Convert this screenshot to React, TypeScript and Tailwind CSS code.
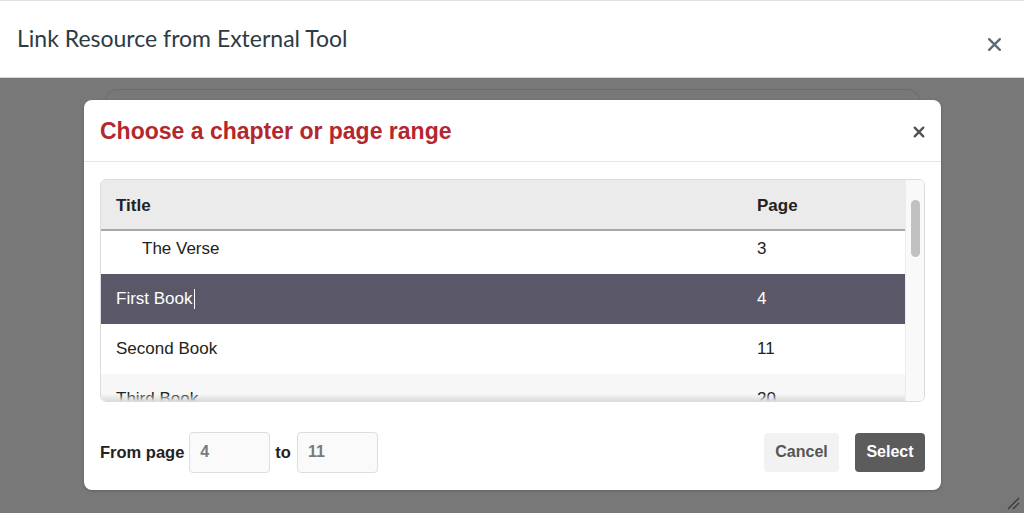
const rows = [
	{ title: 'The Verse', page: '3', indent: true },
	{ title: 'First Book', page: '4', selected: true },
	{ title: 'Second Book', page: '11' },
	{ title: 'Third Book', page: '20', shaded: true },
	{ title: 'Fourth Book', page: '27' },
];

function CloseIcon({ className, stroke }: { className: string; stroke: number }) {
	return (
		<svg viewBox="0 0 14 14" className={className} fill="none" stroke="currentColor" strokeWidth={stroke} strokeLinecap="round">
			<path d="M2 2 L12 12 M12 2 L2 12" />
		</svg>
	);
}

export default function App() {
	return (
		<div className="w-[1024px] h-[513px] flex flex-col bg-[#787878] overflow-hidden font-['Liberation_Sans',Arial,sans-serif]">
			<div className="h-[78px] shrink-0 bg-white border-t border-[#e2e2e2] border-b border-b-[#d8d8d8] flex items-center justify-between pl-[17px] pr-[22px]">
				<h1 className="font-['Lato',sans-serif] text-[23px] text-[#2d3b45] -mt-[2px]">Link Resource from External Tool</h1>
				<CloseIcon className="w-[15px] h-[15px] text-[#5f6b73] mt-[10px]" stroke={2.2} />
			</div>

			<div className="relative flex-1">
				<div className="absolute left-[105px] top-[11px] w-[815px] h-[395px] rounded-[12px] border border-[#6c6c6c]" />

				<div className="absolute left-[84px] top-[22px] w-[857px] h-[390px] bg-white rounded-[8px] flex flex-col shadow-[0_1px_3px_rgba(0,0,0,0.2)]">
					<div className="h-[62px] shrink-0 flex items-center justify-between px-[16px] border-b border-[#e5e5e5]">
						<h2 className="text-[23px] font-bold text-[#b3272f] mt-[2px]">Choose a chapter or page range</h2>
						<CloseIcon className="w-[12px] h-[12px] text-[#555] mt-[2px]" stroke={2.8} />
					</div>

					<div className="px-[16px] pt-[17px]">
						<div className="h-[223px] border border-[#dcdcdc] rounded-[6px] overflow-hidden flex">
							<div className="flex-1 flex flex-col min-w-0">
								<div className="h-[51px] shrink-0 bg-[#ebebeb] border-b-2 border-[#a8a8a8] flex items-center text-[17px] font-bold text-[#222] pt-[2px]">
									<div className="w-[656px] pl-[15px]">Title</div>
									<div>Page</div>
								</div>
								<div className="flex-1 overflow-hidden relative">
									<div className="-mt-[7px]">
										{rows.map((r) => (
											<div
												key={r.title}
												className={
													'h-[50px] flex items-center text-[17px] ' +
													(r.selected
														? 'bg-[#5a5868] text-white'
														: r.shaded
															? 'bg-[#f7f7f7] text-[#222]'
															: 'bg-white text-[#222]')
												}
											>
												<div className={'w-[656px] ' + (r.indent ? 'pl-[41px]' : 'pl-[15px]')}>
													{r.title}
													{r.selected && <span className="inline-block w-px h-[20px] bg-white align-middle ml-px -mt-[2px]" />}
												</div>
												<div>{r.page}</div>
											</div>
										))}
									</div>
									<div className="absolute left-0 right-0 bottom-0 h-[7px] bg-gradient-to-b from-transparent to-[#dcdcdc]" />
								</div>
							</div>
							<div className="w-[19px] shrink-0 bg-[#f9f9f9] border-l border-[#ececec] pt-[20px] flex justify-center">
								<div className="w-[9px] h-[57px] rounded-full bg-[#c1c1c1]" />
							</div>
						</div>
					</div>

					<div className="flex-1 flex items-center justify-between px-[16px] pt-[12px]">
						<div className="flex items-center text-[16.5px] font-bold text-[#222]">
							<span>From page</span>
							<div className="ml-[5px] w-[81px] h-[41px] border border-[#dedede] rounded-[4px] bg-[#fafafa] flex items-center pl-[10px] text-[16px] text-[#7a7a7a]">4</div>
							<span className="ml-[5px]">to</span>
							<div className="ml-[6px] w-[81px] h-[41px] border border-[#dedede] rounded-[4px] bg-[#fafafa] flex items-center pl-[10px] text-[16px] text-[#7a7a7a]">11</div>
						</div>
						<div className="flex items-center gap-[16px] text-[16px] font-bold">
							<button className="w-[75px] h-[39px] rounded-[4px] bg-[#f2f2f2] text-[#555]">Cancel</button>
							<button className="w-[70px] h-[39px] rounded-[4px] bg-[#5c5c5c] text-white">Select</button>
						</div>
					</div>
				</div>

				<svg className="absolute right-[4px] bottom-[3px] w-[14px] h-[14px]" viewBox="0 0 14 14" stroke="#333" strokeWidth={1.2}>
					<path d="M2 13 L13 2 M7 13 L13 7" />
				</svg>
			</div>
		</div>
	);
}
